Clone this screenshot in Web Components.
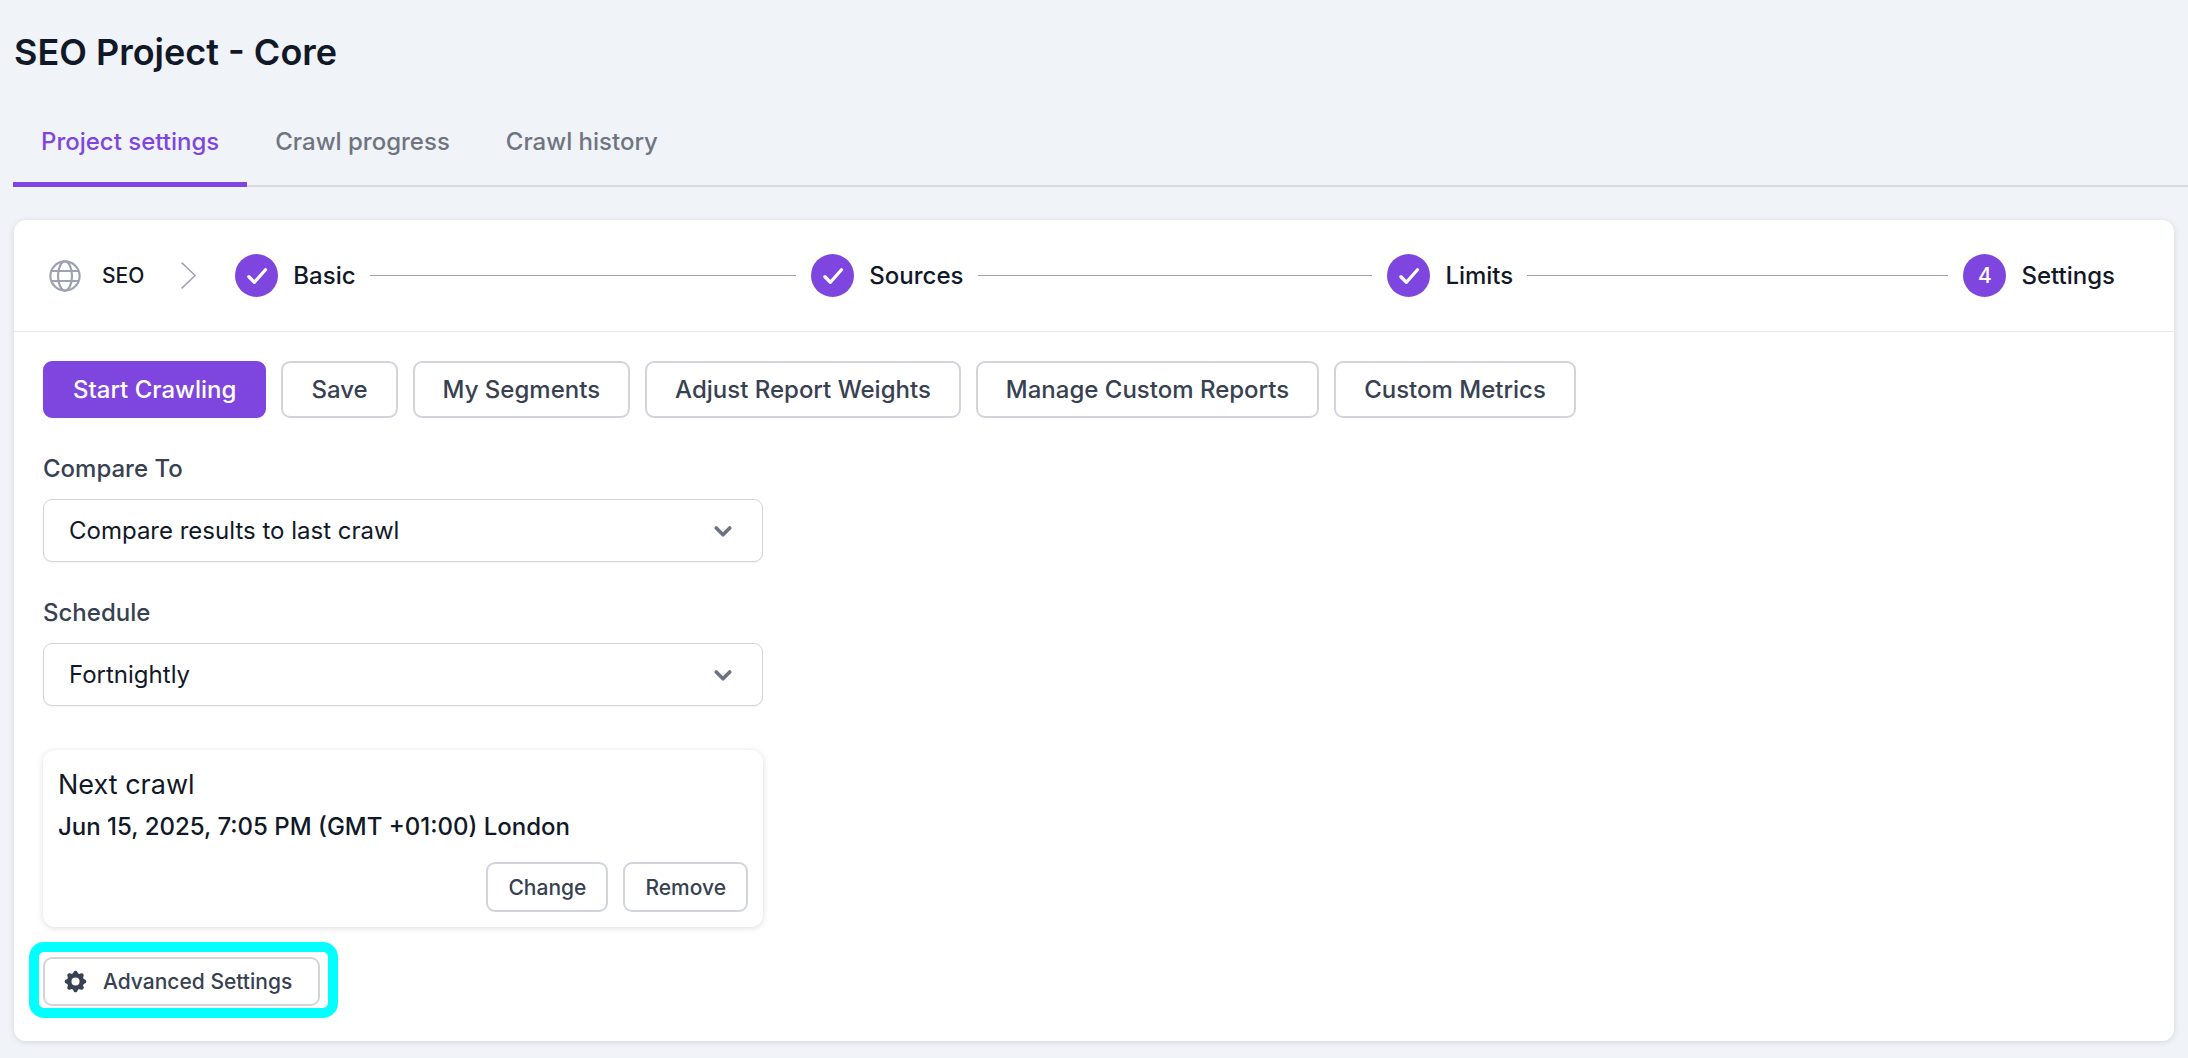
<!DOCTYPE html>
<html lang="en"><head><meta charset="utf-8"><title>SEO Project - Core</title>
<style>
html,body{margin:0;background:#f0f3f8;}
body{font-family:Inter,"Liberation Sans",sans-serif;width:2188px;height:1058px;overflow:hidden;}
</style></head>
<body>
<seo-page>
  <page-title>SEO Project - Core</page-title>
  <tab-bar>
    <tab-item active>Project settings</tab-item>
    <tab-item>Crawl progress</tab-item>
    <tab-item>Crawl history</tab-item>
  </tab-bar>
  <app-card>
    <step-bar slot="head">
      <step-item done label="Basic"></step-item>
      <step-item done label="Sources"></step-item>
      <step-item done label="Limits"></step-item>
      <step-item num="4" label="Settings"></step-item>
    </step-bar>
    <action-row>
      <ui-button primary>Start Crawling</ui-button>
      <ui-button>Save</ui-button>
      <ui-button>My Segments</ui-button>
      <ui-button>Adjust Report Weights</ui-button>
      <ui-button>Manage Custom Reports</ui-button>
      <ui-button>Custom Metrics</ui-button>
    </action-row>
    <select-field label="Compare To" value="Compare results to last crawl"></select-field>
    <select-field label="Schedule" value="Fortnightly"></select-field>
    <next-crawl when="Jun 15, 2025, 7:05 PM (GMT +01:00) London"></next-crawl>
    <advanced-button>Advanced Settings</advanced-button>
  </app-card>
</seo-page>
<script>
function def(name, css, html, init){
  customElements.define(name, class extends HTMLElement{
    constructor(){super();const s=this.attachShadow({mode:'open'});
      s.innerHTML='<style>'+css+'</style>'+(typeof html==='function'?html(this):html);}
    connectedCallback(){
      if(typeof html==='function'){this.shadowRoot.innerHTML='<style>'+css+'</style>'+html(this);}
      if(init)init(this);
    }
  });
}
def('seo-page',':host{display:block;padding:0 14px 0 13px;}','<slot></slot>');
def('page-title',':host{display:block;font-size:36px;font-weight:600;line-height:54px;color:#111827;padding:25px 0 0 1px;}','<slot></slot>');
def('tab-bar',':host{display:flex;margin-top:16px;margin-right:-14px;border-bottom:2px solid #d8dbe2;height:90px;box-sizing:content-box;}','<slot></slot>');
def('tab-item',`:host{display:block;box-sizing:border-box;height:92px;margin-bottom:-2px;padding:29px 28px 0;font-size:24px;line-height:36px;font-weight:500;color:#6f7580;border-bottom:5px solid transparent;}
:host([active]){color:#7e46de;border-bottom-color:#7e46de;}`,'<slot></slot>');
def('app-card',`:host{display:block;margin:33px 0 0 1px;background:#fff;border-radius:12px;box-shadow:0 1px 6px rgba(0,0,0,.12);height:821px;box-sizing:border-box;}
.b{padding:29px 29px 0;}`,'<slot name="head"></slot><div class="b"><slot></slot></div>');
const CHECK='<svg viewBox="0 0 24 24" width="30" height="30" fill="none" stroke="#fff" stroke-width="2.6" stroke-linecap="round" stroke-linejoin="round"><path d="M5.5 12.6l4.4 4.4L18.8 7"/></svg>';
def('step-bar',`:host{display:flex;align-items:center;height:112px;box-sizing:border-box;padding:0 59px 0 35px;border-bottom:1.5px solid #e5e7eb;}
.g{width:32px;height:32px;flex:none;margin-right:21px;}
.n{font-size:21px;font-weight:500;color:#111827;line-height:32px;}
.c{flex:none;margin:0 39px 0 37px;width:15px;height:27px;}
::slotted(step-item:last-child){flex:none;}`,
`<svg class="g" viewBox="0 0 32 32" fill="none" stroke="#9ca3af" stroke-width="2.2"><circle cx="16" cy="16" r="14.6"/><ellipse cx="16" cy="16" rx="7" ry="14.6"/><path d="M2.8 11h26.4M2.8 21h26.4"/></svg><span class="n">SEO</span><svg class="c" viewBox="0 0 15 27" fill="none" stroke="#9ca3af" stroke-width="1.5"><path d="M0.6 0.6L14.2 13.5L0.6 26.4"/></svg><slot></slot>`);
def('step-item',`:host{display:flex;align-items:center;flex:1;min-width:0;}
.d{width:43px;height:43px;border-radius:50%;background:#7e46de;color:#fff;display:flex;align-items:center;justify-content:center;font-size:21px;font-weight:500;flex:none;}
.t{margin-left:15px;font-size:24px;font-weight:500;color:#111827;white-space:nowrap;}
.l{flex:1;height:1.5px;background:#9ca3af;margin:0 15px 0 14px;}
:host(:last-child) .l{display:none;}`,
h=>`<span class="d">${h.hasAttribute('done')?CHECK:(h.getAttribute('num')||'')}</span><span class="t">${h.getAttribute('label')||''}</span><span class="l"></span>`);
def('action-row',':host{display:flex;gap:15px;}','<slot></slot>');
def('ui-button',`:host{display:inline-flex;align-items:center;box-sizing:border-box;height:57px;padding:0 28px;border:2px solid #d1d5db;border-radius:9px;background:#fff;color:#374151;font-size:24px;font-weight:500;white-space:nowrap;}
:host([primary]){background:#7e46de;border-color:#7e46de;color:#fff;}
:host([small]){height:50px;font-size:21px;padding:0 20px;}`,'<slot></slot>');
def('select-field',`:host{display:block;margin-top:35px;width:720px;}
label{display:block;font-size:24px;font-weight:500;line-height:32px;color:#374151;margin-bottom:14px;}
.s{display:flex;align-items:center;justify-content:space-between;box-sizing:border-box;height:63px;padding:0 24px 0 25px;border:1.5px solid #d1d5db;border-radius:9px;background:#fff;box-shadow:0 1px 2px rgba(0,0,0,.05);font-size:24px;color:#111827;}
svg{width:30px;height:30px;flex:none;margin-right:0;}`,
h=>`<label>${h.getAttribute('label')}</label><div class="s"><span>${h.getAttribute('value')}</span><svg viewBox="0 0 20 20" fill="none" stroke="#6b7280" stroke-width="2.4" stroke-linecap="round" stroke-linejoin="round"><path d="M5.5 8l4.5 4.5L14.500 8"/></svg></div>`);
def('next-crawl',`:host{display:block;margin-top:44px;width:720px;height:177px;box-sizing:border-box;border-radius:12px;background:#fff;box-shadow:0 1px 6px rgba(0,0,0,.14);padding:15px;}
.a{font-size:27px;line-height:40px;color:#111827;}
.w{font-size:24px;font-weight:500;line-height:36px;color:#111827;margin-top:4px;}
.r{display:flex;justify-content:flex-end;gap:15px;margin-top:17px;}`,
h=>`<div class="a">Next crawl</div><div class="w">${h.getAttribute('when')}</div><div class="r"><ui-button small>Change</ui-button><ui-button small>Remove</ui-button></div>`);
def('advanced-button',`:host{display:block;position:relative;margin-top:30px;width:277px;height:49px;}
.btn{display:flex;align-items:center;box-sizing:border-box;height:49px;border:2px solid #d1d5db;border-radius:9px;background:#fff;padding:0 0 0 19px;color:#374151;font-size:21px;font-weight:500;white-space:nowrap;}
svg{width:27px;height:27px;flex:none;margin-right:14px;margin-left:-2px;}
.hl{position:absolute;left:-14px;top:-15px;width:309px;height:76px;box-sizing:border-box;border:10px solid #00ffff;border-radius:15px;pointer-events:none;}`,
`<div class="btn"><svg viewBox="0 0 20 20" fill="#374151"><path fill-rule="evenodd" clip-rule="evenodd" d="M11.49 3.17c-.38-1.56-2.6-1.56-2.98 0a1.532 1.532 0 01-2.286.948c-1.372-.836-2.942.734-2.106 2.106.54.886.061 2.042-.947 2.287-1.561.379-1.561 2.6 0 2.978a1.532 1.532 0 01.947 2.287c-.836 1.372.734 2.942 2.106 2.106a1.532 1.532 0 012.287.947c.379 1.561 2.6 1.561 2.978 0a1.533 1.533 0 012.287-.947c1.372.836 2.942-.734 2.106-2.106a1.533 1.533 0 01.947-2.287c1.561-.379 1.561-2.6 0-2.978a1.532 1.532 0 01-.947-2.287c.836-1.372-.734-2.942-2.106-2.106a1.532 1.532 0 01-2.287-.947zM10 13a3 3 0 100-6 3 3 0 000 6z"/></svg><slot></slot></div><div class="hl"></div>`);
</script>
</body></html>
